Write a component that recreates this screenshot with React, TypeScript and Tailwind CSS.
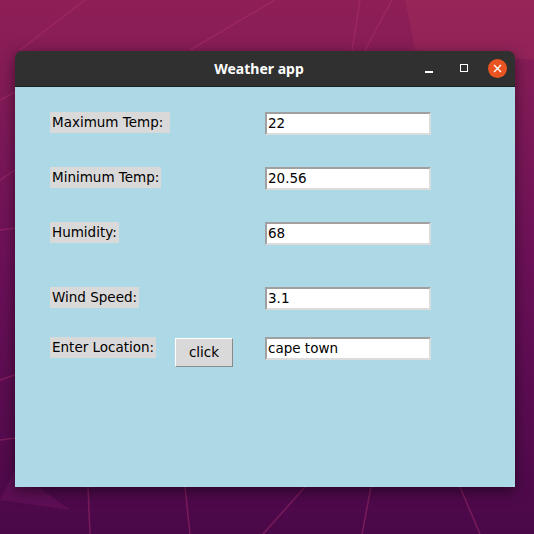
import React from 'react';

const ui = { fontFamily: '"DejaVu Sans", Verdana, sans-serif' };

function Label({ text }: { text: string }) {
  return (
    <span
      style={ui}
      className="inline-flex items-center h-[21px] bg-[#d9d9d9] pl-[2px] pr-[2px] text-[13.5px] leading-none text-black whitespace-pre"
    >
      {text}
    </span>
  );
}

function Entry({ value }: { value: string }) {
  return (
    <div
      style={ui}
      className="w-[166px] h-[23px] bg-white border-2 border-t-[#a0a0a0] border-l-[#a0a0a0] border-r-[#dcdcdc] border-b-[#dcdcdc] flex items-center pl-[1px] text-[13.5px] leading-none text-black"
    >
      {value}
    </div>
  );
}

function Wallpaper() {
  return (
    <svg className="absolute inset-0" width="534" height="534" viewBox="0 0 534 534">
      <g stroke="#b0306e" strokeOpacity="0.45" strokeWidth="1.5" fill="none">
        <line x1="20" y1="50" x2="85" y2="0" />
        <line x1="190" y1="50" x2="275" y2="0" />
        <line x1="352" y1="50" x2="360" y2="0" />
        <line x1="365" y1="50" x2="392" y2="0" />
        <line x1="0" y1="180" x2="15" y2="170" />
        <line x1="0" y1="230" x2="15" y2="228" />
        <line x1="0" y1="380" x2="15" y2="375" />
        <line x1="0" y1="440" x2="15" y2="438" />
        <line x1="263" y1="534" x2="305" y2="487" />
        <line x1="362" y1="534" x2="371" y2="487" />
        <line x1="480" y1="534" x2="460" y2="487" />
        <line x1="190" y1="534" x2="185" y2="487" />
        <line x1="90" y1="534" x2="88" y2="487" />
        <line x1="0" y1="100" x2="15" y2="92" />
      </g>
      <polygon points="0,500 70,510 15,470" fill="#7a1a6a" fillOpacity="0.35" />
      <polygon points="405,0 534,0 534,60 415,50" fill="#a8305c" fillOpacity="0.35" />
    </svg>
  );
}

export default function App() {
  return (
    <div className="relative w-[534px] h-[534px] overflow-hidden bg-gradient-to-b from-[#8e1f56] via-[#6b1058] to-[#4a0849]">
      <Wallpaper />
      <div className="relative pt-[51px] pl-[15px]">
        <div className="w-[500px] shadow-[0_4px_14px_rgba(0,0,0,0.5)] rounded-t-[7px] overflow-hidden">

          <div className="h-[36px] bg-[#303030] flex items-center relative border-b border-[#1e1e1e]">
            <div className="flex-1 text-center text-white font-bold text-[14px] pr-[12px]" style={{ fontFamily: '"Noto Sans", "Open Sans", sans-serif' }}>
              Weather app
            </div>
            <div className="absolute right-[8px] top-0 h-full flex items-center gap-[7px]">
              <div className="flex">
                <div className="w-[35px] flex justify-center">
                  <div className="w-[8px] h-[1.5px] bg-white mt-[7px]" />
                </div>
                <div className="w-[35px] flex justify-center">
                  <div className="w-[8px] h-[8px] border border-white" />
                </div>
              </div>
              <div className="w-[19px] h-[19px] rounded-full bg-[#e95420] flex items-center justify-center">
                <svg width="9" height="9" viewBox="0 0 9 9">
                  <path d="M1 1L8 8M8 1L1 8" stroke="white" strokeWidth="1.4" />
                </svg>
              </div>
            </div>
          </div>

          <div className="h-[400px] bg-[#add8e6] pl-[35px] pt-[25px]">
            <div className="flex h-[23px]">
              <div className="w-[215px] flex items-start"><Label text="Maximum Temp: " /></div>
              <Entry value="22" />
            </div>
            <div className="flex h-[23px] mt-[32px]">
              <div className="w-[215px] flex items-start"><Label text="Minimum Temp:" /></div>
              <Entry value="20.56" />
            </div>
            <div className="flex h-[23px] mt-[32px]">
              <div className="w-[215px] flex items-start"><Label text="Humidity:" /></div>
              <Entry value="68" />
            </div>
            <div className="flex h-[23px] mt-[42px]">
              <div className="w-[215px] flex items-start"><Label text="Wind Speed:" /></div>
              <Entry value="3.1" />
            </div>
            <div className="flex mt-[27px]">
              <div className="w-[215px] flex items-start">
                <div className="w-[125px] flex items-start"><Label text="Enter Location:" /></div>
                <button
                  style={ui}
                  className="mt-[1px] w-[58px] h-[29px] bg-[#d9d9d9] border border-t-white border-l-white border-r-[#8a8a8a] border-b-[#8a8a8a] text-[13.5px] text-black leading-none"
                >
                  click
                </button>
              </div>
              <Entry value="cape town" />
            </div>
          </div>

        </div>
      </div>
    </div>
  );
}
